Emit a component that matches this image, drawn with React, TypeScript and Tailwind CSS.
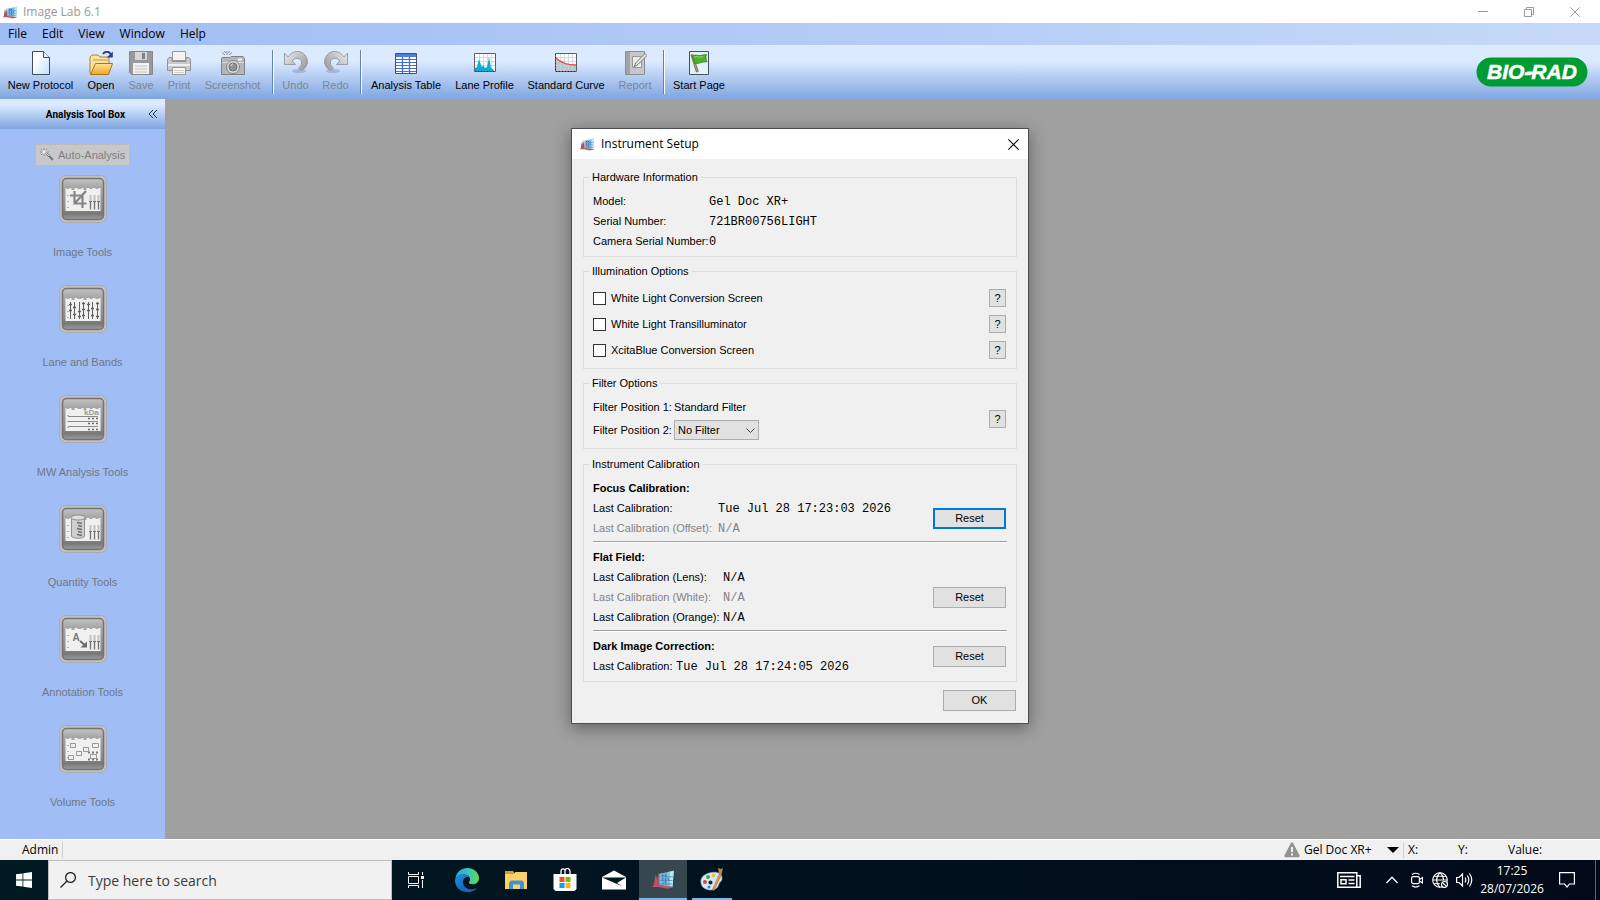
import React from 'react';

interface ToolbarItem {
  label: string;
  width: string;
  icon: React.ReactNode;
  disabled?: boolean;
}

interface CalibrationRow {
  label: string;
  value: string;
  disabled?: boolean;
}

/* ---------- Icons ---------- */

const AppIcon = ({ className = 'w-4 h-4' }: { className?: string }) => (
  <svg viewBox="0 0 16 16" className={className} fill="none">
    <path d="M5.500 4.500L10 3.700 15.200 2.500 14.300 13.200 5.500 12.200z" fill="#7fc4e4" />
    <path d="M11.500 3.400l3.700-.9-.9 10.700-2.800-.4z" fill="#bfe6f3" />
    <path d="M6 6.500h8.500M6 9h8.300M6 11.300h8M8 4.300v8M10 3.900v8.500M12 3.500v9" stroke="#3f83b8" strokeWidth="0.500" />
    <path d="M7 5.500h1M9 5.500h1M7 8h1M9 8h1M11 8h1M9 10h1" stroke="#28578f" strokeWidth="0.800" />
    <path d="M0.500 13.300c1.500-.6 1.600-2.300 1.800-4.800l.9-3.500.8 3.500L5 3.500l.6 8.500 9.900 1.300-4.500 1.200-6-1.200z" fill="#bd5765" />
    <path d="M2.700 8.500v4M4.500 7v5.500" stroke="#8b5575" strokeWidth="0.600" />
  </svg>
);

const NewIcon = () => (
  <svg viewBox="0 0 24 24" className="w-6 h-6">
    <defs>
      <linearGradient id="page" x1="0" y1="0" x2="1" y2="1">
        <stop offset="0.3" stopColor="#fff" />
        <stop offset="1" stopColor="#b9e2fa" />
      </linearGradient>
    </defs>
    <path d="M3.500 0.500h11l6 6v17h-17z" fill="url(#page)" stroke="#3d4f5e" />
    <path d="M14.500 0.500v6h6" fill="#e6f2fa" stroke="#3d4f5e" />
  </svg>
);

const OpenIcon = () => (
  <svg viewBox="0 0 24 24" className="w-6 h-6">
    <defs>
      <linearGradient id="folder" x1="0" y1="0" x2="0" y2="1">
        <stop offset="0" stopColor="#ffe49a" />
        <stop offset="1" stopColor="#eda622" />
      </linearGradient>
    </defs>
    <path d="M1 22V6l2-2h6l2 2h9v16z" fill="#f7e3a0" stroke="#a8822c" />
    <path d="M4 9h15" stroke="#c79b3a" />
    <path d="M1.500 23.500l5-11h17l-4 11z" fill="url(#folder)" stroke="#a8751b" />
    <path d="M14 3c2-3 6-3 7.500 0" fill="none" stroke="#33399a" strokeWidth="2" />
    <path d="M23.800 0.500v6h-6z" fill="#33399a" />
  </svg>
);

const SaveIcon = () => (
  <svg viewBox="0 0 24 24" className="w-6 h-6">
    <path d="M0.500 0.500h23v23h-21l-2-2z" fill="#98999b" stroke="#85868a" />
    <path d="M6 1h12v8H6z" fill="#d6d7d9" />
    <path d="M13 2h3v6h-3z" fill="#808184" />
    <path d="M4 12h16v11H4z" fill="#f1f1f1" />
    <path d="M6 15h12M6 18h12M6 21h12" stroke="#c4c4c4" />
  </svg>
);

const PrintIcon = () => (
  <svg viewBox="0 0 24 24" className="w-6 h-6">
    <path d="M5.500 0.500h13v9h-13z" fill="#f3f3f3" stroke="#98989a" />
    <path d="M2 6.500h3v4h14v-4h3l1.500 2v11h-23v-11z" fill="#c8c9cc" stroke="#909193" />
    <path d="M1 14h22" stroke="#efefef" strokeWidth="2" />
    <path d="M5.500 16.500h13v7h-13z" fill="#f6f6f6" stroke="#98989a" />
    <path d="M7 19.500h10M7 21.500h10" stroke="#cfcfcf" />
  </svg>
);

const ScreenshotIcon = () => (
  <svg viewBox="0 0 24 24" className="w-6 h-6">
    <path d="M6 0v4M1 1.500l3 2.500M11 1.500L8 4M3.500 0l1 2M8.500 0l-1 2" stroke="#8f9093" />
    <path d="M1 6.500h8l1-1h12l1.500 2v16h-23v-16z" fill="#b4b5b8" stroke="#808184" />
    <path d="M1 11.500h22" stroke="#dcdddf" />
    <circle cx="12" cy="16" r="6.500" fill="#d8d8da" stroke="#848587" />
    <circle cx="12" cy="16" r="4" fill="#909194" stroke="#6f7072" />
    <path d="M10 15c0-1.500 1-2 2-2" stroke="#f2f2f2" fill="none" />
    <path d="M17 8.500h4" stroke="#f4f4f4" strokeWidth="2" />
  </svg>
);

const TurnArrow = ({ flip = false }: { flip?: boolean }) => (
  <svg viewBox="0 0 24 24" className={flip ? 'w-6 h-6 -scale-x-100' : 'w-6 h-6'}>
    <defs>
      <linearGradient id="turn" x1="0" y1="0" x2="1" y2="0.600">
        <stop offset="0" stopColor="#eceded" />
        <stop offset="1" stopColor="#a2a4a8" />
      </linearGradient>
    </defs>
    <ellipse cx="15" cy="20" rx="7" ry="2" fill="#8ca3c8" opacity="0.6" />
    <path
      d="M0.500 2l3.500 4C7 1.500 12-.5 16 .8c5 1.700 7.500 6 7.500 10-.3 4.500-3 7.700-6.500 8.400L14.500 17c4-2.500 4-8 .5-9.500-3-1-5 .5-7 2.500l3.500 3.500h-11z"
      fill="url(#turn)"
      stroke="#93959a"
      strokeWidth="0.9"
    />
  </svg>
);

const TableIcon = () => (
  <svg viewBox="0 0 24 24" className="w-6 h-6">
    <path d="M1.500 2.500h21v20h-21z" fill="#fff" stroke="#4a4f5a" />
    <path d="M2 3h20v3H2z" fill="#4f7be8" />
    <path d="M2 8.500h20M2 11.500h20M2 14.500h20M2 17.500h20M2 20.500h20" stroke="#3f6fdc" />
    <path d="M8.500 6v16M15.500 6v16" stroke="#3f6fdc" strokeWidth="1.300" />
  </svg>
);

const ProfileIcon = () => (
  <svg viewBox="0 0 24 24" className="w-6 h-6">
    <path d="M1.500 2.500h21v18h-21z" fill="#fff" stroke="#5c5f66" />
    <path d="M2 6.500h20M2 10.500h20M2 14.500h20M6.500 3v17M10.500 3v17M14.500 3v17M18.500 3v17" stroke="#d4d7dd" />
    <path d="M2 20v-3l2-1 1-4 1-4 2 6 1 2 1-2 2 3 2-1 1-4 1-6 1 5 1 6 2 1 1 2z" fill="#08aed6" />
    <path d="M2 20.500h20" stroke="#333" strokeDasharray="1 2" />
  </svg>
);

const CurveIcon = () => (
  <svg viewBox="0 0 24 24" className="w-6 h-6">
    <path d="M1.500 2.500h21v18h-21z" fill="#fff" stroke="#5c5f66" />
    <path d="M2 7c4 4 9 7 20 7v6H2z" fill="#bcc5cf" />
    <path d="M2 6.500h20M2 10.500h20M2 14.500h20M6.500 3v17M10.500 3v17M14.500 3v17M18.500 3v17" stroke="#cdd1d7" strokeWidth="0.800" />
    <path d="M2 7c4 4 9 7 20 7" fill="none" stroke="#e0525a" strokeWidth="1.300" />
    <path d="M2 20.500h20M1.500 3v17" stroke="#222" strokeDasharray="1 2" />
  </svg>
);

const ReportIcon = () => (
  <svg viewBox="0 0 24 24" className="w-6 h-6">
    <path d="M2.500 0.500h19v23h-19z" fill="#c6c7ca" stroke="#8d8e91" />
    <path d="M3 1h4v22H3z" fill="#a3a4a7" />
    <path d="M9.500 5.500h9v11h-9z" fill="#ececee" stroke="#97989b" />
    <path d="M11 16l2-4.500 9-9 2 2-9 9z" fill="#e4e4e6" stroke="#77787b" />
  </svg>
);

const StartPageIcon = () => (
  <svg viewBox="0 0 24 24" className="w-6 h-6">
    <path d="M2.500 0.500h19v23h-19z" fill="#e2f2fc" stroke="#45525e" />
    <path d="M4 4l1.800-0.500 5.500 17-2 0.500z" fill="#a89a70" stroke="#685f43" strokeWidth="0.700" />
    <path d="M5.500 5c3-2 5 0 8-0.500l6-1c-1 3-0.500 5 0.500 7.500-3-1-6 1.500-12 1.500z" fill="#4fb32a" stroke="#317f1a" strokeWidth="0.800" />
    <path d="M7 6c3-1 5 1 9-0.500" stroke="#92dc65" fill="none" />
  </svg>
);

const WandIcon = () => (
  <svg viewBox="0 0 16 16" className="w-4 h-4">
    <path d="M7 6l7 7" stroke="#77787b" strokeWidth="2.200" />
    <path d="M7 6l3 3" stroke="#e2e2e2" strokeWidth="1" />
    <path d="M5 1v2M5 7v2M1 5h2M8 5h2M2 2l1 1M8 2L7 3M2 8l1-1" stroke="#8c8d90" />
    <circle cx="5" cy="5" r="1.300" fill="#f1f1f1" />
  </svg>
);

const CollapseIcon = () => (
  <svg viewBox="0 0 10 10" className="w-2.5 h-2.5" fill="none" stroke="#1c2f55">
    <path d="M5 1L1 5l4 4M9 1L5 5l4 4" />
  </svg>
);

const CloseIcon = ({ className }: { className: string }) => (
  <svg viewBox="0 0 10 10" className={className} fill="none" stroke="currentColor">
    <path d="M0.300 0.300l9.400 9.400M9.700 0.300L0.300 9.700" />
  </svg>
);

const LaneMarks = () => (
  <g stroke="#747474">
    <path d="M31.500 20v15M35.500 20v15M39.500 20v15" stroke="#c2c2c2" strokeWidth="2" />
    <path d="M30 26.500h3M34 26.500h3M38 26.500h3M31.500 26v8M35.500 26v8M39.500 26v8" />
  </g>
);

// Framed glossy tile shared by every entry of the tool box
const ToolTile = ({ children }: { children: React.ReactNode }) => (
  <svg viewBox="0 0 48 48" className="w-12 h-12">
    <defs>
      <linearGradient id="tile" x1="0" y1="0" x2="0" y2="1">
        <stop offset="0" stopColor="#c4c4c4" />
        <stop offset="0.200" stopColor="#a8a8a8" />
        <stop offset="0.750" stopColor="#8a8a8a" />
        <stop offset="0.850" stopColor="#777" />
        <stop offset="1" stopColor="#9c9c9c" />
      </linearGradient>
    </defs>
    <rect x="0.500" y="0.500" width="47" height="47" rx="6" fill="#c0c0c0" stroke="#a9acb3" />
    <rect x="3.500" y="3.500" width="41" height="41" rx="4" fill="url(#tile)" stroke="#747474" strokeWidth="1.500" />
    <path d="M6.500 13h1v1h3v-1h2v2h3v-2h3v1h4v-1h2v2h3v-2h3v1h3v-1h3v1h3v-1h2v23h-35z" fill="#f0f0f0" />
    <path d="M8 20.500h2M8 26.500h2M8 32.500h2" stroke="#b0b0b0" />
    {children}
  </svg>
);

const BioRadLogo = () => (
  <svg viewBox="0 0 112 30" className="w-28 h-[30px]" role="img" aria-label="BIO-RAD">
    <rect x="0.500" y="0.500" width="111" height="29" rx="14.500" fill="#009b32" />
    <text x="11" y="22" fontFamily="Liberation Sans, sans-serif" fontSize="21" fontWeight="700" fontStyle="italic" fill="#fff" stroke="#fff" strokeWidth="0.500">
      BIO-RAD
    </text>
    <path d="M51 14.500h9v3h-9z" fill="#fff" />
  </svg>
);

/* ---------- Data ---------- */

const MENUS = ['File', 'Edit', 'View', 'Window', 'Help'];

const TOOLBAR: ToolbarItem[][] = [
  [
    { label: 'New Protocol', width: 'w-[65px]', icon: <NewIcon /> },
    { label: 'Open', width: 'w-[26px]', icon: <OpenIcon /> },
    { label: 'Save', width: 'w-[24px]', icon: <SaveIcon />, disabled: true },
    { label: 'Print', width: 'w-[22px]', icon: <PrintIcon />, disabled: true },
    { label: 'Screenshot', width: 'w-[55px]', icon: <ScreenshotIcon />, disabled: true },
  ],
  [
    { label: 'Undo', width: 'w-[25px]', icon: <TurnArrow />, disabled: true },
    { label: 'Redo', width: 'w-[25px]', icon: <TurnArrow flip />, disabled: true },
  ],
  [
    { label: 'Analysis Table', width: 'w-[70px]', icon: <TableIcon /> },
    { label: 'Lane Profile', width: 'w-[57px]', icon: <ProfileIcon /> },
    { label: 'Standard Curve', width: 'w-[76px]', icon: <CurveIcon /> },
    { label: 'Report', width: 'w-[32px]', icon: <ReportIcon />, disabled: true },
  ],
  [{ label: 'Start Page', width: 'w-[50px]', icon: <StartPageIcon /> }],
];

const TOOLS: { label: string; art: React.ReactNode }[] = [
  {
    label: 'Image Tools',
    art: (
      <>
        <LaneMarks />
        <path d="M11 20.500h12.500v12.500M15.500 16v12.500h12M16 28l11-12" fill="none" stroke="#858585" strokeWidth="2.200" />
      </>
    ),
  },
  {
    label: 'Lane and Bands',
    art: (
      <g stroke="#606060">
        <path d="M11.500 17v17M15.500 17v17M20.500 17v17M24.500 17v17M29.500 17v17M33.500 17v17M38.500 17v17" />
        <path d="M10 19.500h3M10 25.500h3M14 22.500h3M14 29.500h3M19 26.500h3M19 31.500h3M23 18.500h3M23 24.500h3M23 30.500h3M28 19.500h3M28 25.500h3M32 23.500h3M32 30.500h3M37 18.500h3M37 24.500h3M37 31.500h3" strokeWidth="1.500" />
      </g>
    ),
  },
  {
    label: 'MW Analysis Tools',
    art: (
      <>
        <path d="M9 21.500h30M9 26.500h30M9 31.500h30" stroke="#8a8a8a" />
        <path d="M29 28.500h10M29 34.500h10M29 23.500h10" stroke="#666" strokeWidth="1.500" strokeDasharray="2 2" />
        <text x="25" y="20" fontFamily="Liberation Sans, sans-serif" fontSize="8" fontWeight="700" fill="#9a9a9a">
          kDa
        </text>
      </>
    ),
  },
  {
    label: 'Quantity Tools',
    art: (
      <>
        <LaneMarks />
        <path d="M12.500 13v18c0 3 13 3 13 0V13" fill="#cfcfcf" stroke="#8e8e8e" />
        <ellipse cx="19" cy="12.500" rx="7" ry="2.500" fill="#dedede" stroke="#8e8e8e" />
        <path d="M18 17.500l5 1M19 20.500l4 1M18 23.500l5 1M19 26.500l4 1M18 29.500l5 1" stroke="#6f6f6f" strokeWidth="1.500" />
      </>
    ),
  },
  {
    label: 'Annotation Tools',
    art: (
      <>
        <LaneMarks />
        <text x="13.500" y="26" fontFamily="Liberation Sans, sans-serif" fontSize="10" fontWeight="700" fill="#7a7a7a">
          A
        </text>
        <path d="M21 26l6 5" stroke="#6b6b6b" strokeWidth="2" />
        <path d="M28 26.500v6h-6.500z" fill="#6b6b6b" />
      </>
    ),
  },
  {
    label: 'Volume Tools',
    art: (
      <>
        <path d="M29 27.500h11M29 34.500h11" stroke="#777" strokeWidth="2" strokeDasharray="2 2" />
        <g fill="#f0f0f0" stroke="#999">
          <path d="M11.500 18.500h5v4h-5zM24.500 22.500h5v4h-5zM33.500 18.500h6v4h-6zM17.500 26.500h5v4h-5zM9.500 30.500h5v4h-5zM31.500 29.500h6v4h-6z" />
        </g>
      </>
    ),
  },
];

const HARDWARE = [
  { label: 'Model:', value: 'Gel Doc XR+' },
  { label: 'Serial Number:', value: '721BR00756LIGHT' },
  { label: 'Camera Serial Number:', value: '0' },
];

const ILLUMINATION = ['White Light Conversion Screen', 'White Light Transilluminator', 'XcitaBlue Conversion Screen'];

const FOCUS_ROWS: CalibrationRow[] = [
  { label: 'Last Calibration:', value: 'Tue Jul 28 17:23:03 2026' },
  { label: 'Last Calibration (Offset):', value: 'N/A', disabled: true },
];

const FLAT_ROWS: CalibrationRow[] = [
  { label: 'Last Calibration (Lens):', value: 'N/A' },
  { label: 'Last Calibration (White):', value: 'N/A', disabled: true },
  { label: 'Last Calibration (Orange):', value: 'N/A' },
];

/* ---------- Dialog parts ---------- */

const Group = ({ title, className, children }: { title: string; className: string; children: React.ReactNode }) => (
  <fieldset className={`border border-[#dcdcdc] pl-[9px] pr-2.5 pt-[7px] ${className}`}>
    <legend className="-ml-1 h-3.5 px-[3px] leading-[14px]">{title}</legend>
    {children}
  </fieldset>
);

const HelpButton = ({ topic }: { topic: string }) => (
  <button title={topic} className="w-[17px] h-[18px] shrink-0 border border-[#adadad] bg-[#e1e1e1] text-center leading-4">
    ?
  </button>
);

const PushButton = ({ children, focused = false }: { children: React.ReactNode; focused?: boolean }) => (
  <button
    className={`w-[73px] h-[21px] shrink-0 bg-[#e1e1e1] text-center leading-[17px] ${
      focused ? 'border-2 border-[#0078d7]' : 'border border-[#adadad]'
    }`}
  >
    {children}
  </button>
);

const Rows = ({ rows, labelWidth }: { rows: CalibrationRow[]; labelWidth: string }) => (
  <dl>
    {rows.map(row => (
      <div key={row.label} className={`flex h-5 items-center ${row.disabled ? 'text-[#838383]' : ''}`}>
        <dt className={`shrink-0 whitespace-nowrap ${labelWidth}`}>{row.label}</dt>
        <dd className="pt-0.5 font-['Liberation_Mono',monospace] text-[12px] leading-[18px]">{row.value}</dd>
      </div>
    ))}
  </dl>
);

const Divider = () => <hr className="-mr-px mt-[3px] mb-1 h-0.5 border-t border-b border-t-[#a0a0a0] border-b-white" />;

const InstrumentSetup = () => (
  <section
    role="dialog"
    aria-labelledby="setup-title"
    className="w-[458px] border border-[#4b4f50] bg-[#f0f0f0] text-[11px] text-black shadow-[0_4px_16px_rgba(0,0,0,0.4)]"
  >
    <header className="flex h-[30px] items-center bg-white pl-[7px] pr-[9px]">
      <AppIcon />
      <h2 id="setup-title" className="ml-1.5 flex-1 font-['Open_Sans',sans-serif] text-[12px]">Instrument Setup</h2>
      <button aria-label="Close">
        <CloseIcon className="w-[11px] h-[11px]" />
      </button>
    </header>

    <div className="px-[11px] pt-[11px] pb-3">
      <div className="flex flex-col gap-[7px]">
        <Group title="Hardware Information" className="pb-[5px]">
          <Rows rows={HARDWARE} labelWidth="w-[116px]" />
        </Group>

        <Group title="Illumination Options" className="pb-[5px]">
          {ILLUMINATION.map(option => (
            <div key={option} className="flex h-[26px] items-center justify-between">
              <label className="flex items-center gap-[5px]">
                <input type="checkbox" className="h-[13px] w-[13px] appearance-none border border-[#333] bg-white" />
                {option}
              </label>
              <HelpButton topic={option} />
            </div>
          ))}
        </Group>

        <Group title="Filter Options" className="pb-2">
          <div className="flex items-center justify-between">
            <div className="flex flex-col gap-[3px]">
              <div className="flex h-5 items-center">
                <span className="w-[81px]">Filter Position 1:</span>
                <span>Standard Filter</span>
              </div>
              <div className="flex h-5 items-center">
                <label htmlFor="filter2" className="w-[81px]">Filter Position 2:</label>
                <div className="relative">
                  <select id="filter2" className="block h-5 w-[85px] appearance-none border border-[#adadad] bg-[#e1e1e1] pl-[3px]">
                    <option>No Filter</option>
                  </select>
                  <svg viewBox="0 0 9 6" className="pointer-events-none absolute right-1 top-2 w-[9px] h-1.5" fill="none" stroke="#444">
                    <path d="M0.500 0.500l4 4 4-4" />
                  </svg>
                </div>
              </div>
            </div>
            <HelpButton topic="Filter Options" />
          </div>
        </Group>
      </div>

      <div className="flex flex-col gap-2 pt-2">
        <Group title="Instrument Calibration" className="pb-[5px]">
          <h3 className="h-5 font-bold leading-5">Focus Calibration:</h3>
          <div className="flex items-center justify-between">
            <Rows rows={FOCUS_ROWS} labelWidth="w-[125px]" />
            <PushButton focused>Reset</PushButton>
          </div>
          <Divider />
          <h3 className="h-5 font-bold leading-5">Flat Field:</h3>
          <div className="flex items-center justify-between">
            <Rows rows={FLAT_ROWS} labelWidth="w-[130px]" />
            <PushButton>Reset</PushButton>
          </div>
          <Divider />
          <div className="flex items-center justify-between">
            <div>
              <h3 className="h-5 font-bold leading-5">Dark Image Correction:</h3>
              <Rows rows={[{ label: 'Last Calibration:', value: 'Tue Jul 28 17:24:05 2026' }]} labelWidth="w-[83px]" />
            </div>
            <PushButton>Reset</PushButton>
          </div>
        </Group>

        <div className="flex justify-end pr-px">
          <PushButton>OK</PushButton>
        </div>
      </div>
    </div>
  </section>
);

/* ---------- Window chrome ---------- */

const TitleBar = () => (
  <header className="flex h-[23px] shrink-0 items-center bg-white pl-0.5 pr-0.5 text-[#999]">
    <AppIcon />
    <h1 className="ml-[5px] flex-1 font-['Open_Sans',sans-serif] text-[12px]">Image Lab 6.1</h1>
    <button aria-label="Minimize" className="flex w-[46px] justify-center">
      <svg viewBox="0 0 10 10" className="w-2.5 h-2.5" stroke="currentColor"><path d="M0 4.500h10" /></svg>
    </button>
    <button aria-label="Restore" className="flex w-[46px] justify-center">
      <svg viewBox="0 0 10 10" className="w-2.5 h-2.5" fill="none" stroke="currentColor">
        <path d="M0.500 2.500h7v7h-7zM2.500 2.500v-2h7v7h-2" />
      </svg>
    </button>
    <button aria-label="Close" className="flex w-[46px] justify-center">
      <CloseIcon className="w-2.5 h-2.5" />
    </button>
  </header>
);

const Toolbar = () => (
  <div className="flex h-[54px] shrink-0 items-start bg-linear-to-b from-[#dceafe] from-30% to-[#7fa5e0] pl-2 text-[11px]">
    {TOOLBAR.map((group, i) => (
      <React.Fragment key={i}>
        {i > 0 && <div className="ml-3 mr-[9px] mt-[5px] h-11 w-0.5 border-l border-r border-l-[#5f7fb5] border-r-white" />}
        <div className="flex gap-[15px] pt-1.5">
          {group.map(item => (
            <button
              key={item.label}
              disabled={item.disabled}
              className={`flex flex-col items-center gap-0.5 whitespace-nowrap ${item.width} ${item.disabled ? 'text-[#7e8793]' : 'text-black'}`}
            >
              <span className="block h-6 w-6">{item.icon}</span>
              <span className="leading-4">{item.label}</span>
            </button>
          ))}
        </div>
      </React.Fragment>
    ))}
    <div className="ml-auto mr-3 mt-3">
      <BioRadLogo />
    </div>
  </div>
);

const ToolBox = () => (
  <aside className="flex w-[165px] shrink-0 flex-col bg-[#a0bdf5] text-[11px]">
    <div className="flex h-[30px] shrink-0 items-center justify-end bg-linear-to-b from-[#dceafe] from-20% to-[#7fa5e0] pr-[7px]">
      <h2 className="mr-[23px] font-['Roboto',sans-serif] text-[10px] font-bold">Analysis Tool Box</h2>
      <button aria-label="Collapse">
        <CollapseIcon />
      </button>
    </div>
    <div className="flex flex-col items-center pt-[15px]">
      <button disabled className="flex h-[22px] w-[95px] items-center gap-[3px] border border-[#bcbcbc] bg-[#c8c8c8] pl-[3px] whitespace-nowrap text-[#808080]">
        <WandIcon />
        Auto-Analysis
      </button>
      <nav className="pt-[9px]">
        {TOOLS.map(tool => (
          <button key={tool.label} disabled className="flex h-[110px] w-full flex-col items-center gap-[21px] text-[#6f7785]">
            <ToolTile>{tool.art}</ToolTile>
            <span className="leading-4">{tool.label}</span>
          </button>
        ))}
      </nav>
    </div>
  </aside>
);

const StatusBar = () => (
  <footer className="flex h-[21px] shrink-0 items-center border-t border-white bg-[#f0f0f0] pl-[22px] font-['Open_Sans',sans-serif] text-[12px] text-black">
    <span className="w-10">Admin</span>
    <span className="h-4 border-l border-[#d0d0d0]" />
    <svg viewBox="0 0 16 16" className="ml-auto w-4 h-4">
      <path d="M8 1.500L14.500 14h-13z" fill="#919191" stroke="#919191" strokeWidth="2.500" strokeLinejoin="round" />
      <path d="M8 5v5M8 11.500v2" stroke="#fff" strokeWidth="1.800" />
    </svg>
    <button className="ml-1 flex w-[99px] items-center justify-between pr-1">
      Gel Doc XR+
      <svg viewBox="0 0 12 6" className="w-3 h-1.5"><path d="M0 0h12L6 6z" /></svg>
    </button>
    <span className="h-4 border-l border-[#d0d0d0]" />
    <span className="ml-1 w-[50px]">X:</span>
    <span className="w-[50px]">Y:</span>
    <span className="w-[92px]">Value:</span>
  </footer>
);

const TaskButton = ({ label, children, className = '' }: { label: string; children: React.ReactNode; className?: string }) => (
  <button aria-label={label} className={`flex h-10 w-12 items-center justify-center ${className}`}>
    {children}
  </button>
);

const Taskbar = () => (
  <div className="flex h-10 shrink-0 items-center bg-linear-to-r from-[#011a22] to-[#020a1a] font-['Open_Sans',sans-serif] text-white">
    <TaskButton label="Start">
      <svg viewBox="0 0 16 16" className="w-4 h-4" fill="#fff">
        <path d="M0 2.300L6.500 1.400v6.200H0zM7.300 1.300L16 0v7.600H7.300zM0 8.400h6.500v6.200L0 13.700zM7.300 8.400H16V16l-8.700-1.300z" />
      </svg>
    </TaskButton>
    <label className="flex h-10 w-[344px] items-center gap-3 border border-[#bdbdbd] bg-[#f1f1f1] pl-[11px]">
      <svg viewBox="0 0 16 16" className="w-4 h-4 shrink-0" fill="none" stroke="#222" strokeWidth="1.300">
        <circle cx="10.500" cy="5.500" r="4.900" />
        <path d="M7 9l-6.500 6.500" />
      </svg>
      <input type="text" placeholder="Type here to search" className="w-full bg-transparent text-[14px] outline-none placeholder:text-[#3c3c3c]" />
    </label>
    <div className="flex gap-px">
      <TaskButton label="Task View">
        <svg viewBox="0 0 16 16" className="w-4 h-4" fill="none" stroke="#fff">
          <path d="M0.500 4.500h10v7h-10zM0.500 0v2.500h10V0M0.500 16v-2.500h10V16M14.500 0v3M14.500 8v8" />
          <path d="M13 4h3v3h-3z" fill="#fff" stroke="none" />
        </svg>
      </TaskButton>
      <TaskButton label="Microsoft Edge" className="ml-0.5">
        <svg viewBox="0 0 24 24" className="w-6 h-6">
          <defs>
            <linearGradient id="edgeTop" x1="0" y1="0.400" x2="1" y2="0.500">
              <stop offset="0" stopColor="#2aa5dc" />
              <stop offset="0.500" stopColor="#35c3c9" />
              <stop offset="1" stopColor="#62d84e" />
            </linearGradient>
            <linearGradient id="edgeLow" x1="0" y1="0" x2="1" y2="1">
              <stop offset="0" stopColor="#1b93dd" />
              <stop offset="1" stopColor="#114a9c" />
            </linearGradient>
          </defs>
          <path d="M0.300 10.500C1.500 4 6.500 0 12.300 0 19 0 24 4.600 24 10c0 4-3 6.300-6.300 6.300-2.700 0-4-1-3.800-2 .1-.6 1.200-1 1.200-3C15 8.500 12 6.500 8.500 6.500 5 6.500 2 8 .3 10.500z" fill="url(#edgeTop)" />
          <path d="M0.100 12C0.500 8.500 4 6.300 8.500 6.500c2.500.1 5 1.300 6 3-3-1.500-6.500.5-6.500 5 0 4 4 7.500 8 7.500 2.700 0 5-1 6-2-2 2.700-5.500 4-10 4C5 24-.3 18.500.1 12z" fill="url(#edgeLow)" />
          <path d="M9.500 10.500c-2 1.500-2.500 6 1 9 3 2.500 8 2.500 11.500 0.500-2 2.700-5.500 4-9.500 4C7 23 5 14 9.500 10.500z" fill="#1568bf" />
        </svg>
      </TaskButton>
      <TaskButton label="File Explorer">
        <svg viewBox="0 0 24 24" className="w-6 h-6">
          <path d="M1 3h8l2 2.500V8H1z" fill="#dc9d24" />
          <path d="M1 6h9l1.500-2H23v17H1z" fill="#fcd268" />
          <path d="M5 21v-6.500l2-2h11l2 2V21h-4v-4.500H9V21z" fill="#4192d0" />
        </svg>
      </TaskButton>
      <TaskButton label="Microsoft Store">
        <svg viewBox="0 0 24 24" className="w-6 h-6">
          <path d="M8 6V3.500C8 0 12 0 12 3v3M12 6V3c0-3.500 5-3.500 5 .5V6" fill="none" stroke="#fff" strokeWidth="1.300" />
          <path d="M0.500 6h23v15l-2 2h-19l-2-2z" fill="#fff" />
          <path d="M6.500 9h5v5h-5z" fill="#f25022" />
          <path d="M12.500 9h5v5h-5z" fill="#7fba00" />
          <path d="M6.500 15h5v5h-5z" fill="#00a4ef" />
          <path d="M12.500 15h5v5h-5z" fill="#ffb900" />
        </svg>
      </TaskButton>
      <TaskButton label="Mail">
        <svg viewBox="0 0 24 24" className="w-6 h-6">
          <path d="M0 9L12 2.500 24 9v12.500H0z" fill="#fff" />
          <path d="M0 9.500h24l-9 5.500 5.500 3.500L10.500 14z" fill="#021820" />
        </svg>
      </TaskButton>
      <TaskButton label="Image Lab" className="border-b-2 border-[#76b9ed] bg-[#36474f]">
        <AppIcon className="w-6 h-6" />
      </TaskButton>
      <TaskButton label="Paint">
        <span className="flex h-10 w-10 items-center justify-center border-b-2 border-[#76b9ed]">
          <svg viewBox="0 0 24 24" className="w-6 h-6">
            <path d="M2 19C-1 13 2 8 9 6c7-2 13 0 13 5 0 4-2 3-3 6s-3 6-8 6c-4 0-8-2-9-4z" fill="#cfe8f6" stroke="#8ab4cc" strokeWidth="0.600" />
            <circle cx="5" cy="15" r="2" fill="#d9483f" />
            <circle cx="8" cy="10" r="2" fill="#3fa64b" />
            <circle cx="13.500" cy="8.500" r="1.800" fill="#f0c036" />
            <circle cx="10.500" cy="15.500" r="2" fill="#0b2a3d" />
            <circle cx="9" cy="20" r="1.500" fill="#3b82d6" />
            <path d="M19.500 6.500l2 1L14 23.500l-1.500-1z" fill="#e8973a" stroke="#a76420" strokeWidth="0.500" />
            <path d="M18 1l3 1 2-1-1.500 6.500-2.500-1z" fill="#b98652" />
          </svg>
        </span>
      </TaskButton>
    </div>

    <div className="ml-auto flex h-10 items-center">
      <svg viewBox="0 0 24 16" className="mr-[25px] w-6 h-4" fill="none" stroke="#fff" strokeWidth="1.500">
        <path d="M0.800 0.800h19v14.400h-19zM19.800 3.800h3.400v11.400h-4M3 4.500h14.500M11.500 8h6M11.500 11.500h6M4 7.800h5v4H4z" />
      </svg>
      <svg viewBox="0 0 12 8" className="mr-[13px] w-3 h-2" fill="none" stroke="#fff" strokeWidth="1.300">
        <path d="M0.500 7L6 1.300 11.500 7" />
      </svg>
      <svg viewBox="0 0 12 16" className="mr-[9px] w-3 h-4" fill="none" stroke="#fff" strokeWidth="1.200">
        <rect x="0.600" y="4.600" width="7.800" height="7" rx="1.500" />
        <path d="M8.500 7.500l3-2v5.500l-3-2M1 2.500Q4.500 0 8.500 2.500M1 13.800Q4.500 16.300 8.500 13.800" />
      </svg>
      <svg viewBox="0 0 16 16" className="mr-2 w-4 h-4" fill="none" stroke="#fff" strokeWidth="1.100">
        <circle cx="8" cy="8" r="7.300" />
        <path d="M8 0.700C3.500 5 3.500 11 8 15.300M8 0.700c2.500 2.300 3.500 4.300 3.500 7M0.700 8h14.600M2 4.300h12M2 11.800h6" />
        <circle cx="12.500" cy="12.500" r="3" fill="#020d1a" />
        <path d="M10.500 10.500l4 4" />
      </svg>
      <svg viewBox="0 0 17 16" className="mr-2 w-[17px] h-4" fill="none" stroke="#fff" strokeWidth="1.200">
        <path d="M0.600 5.500H3l3.500-3.500v12L3 10.500H0.600zM9 5.500q1.500 2.500 0 5M11.300 3.500q3 4.500 0 9M13.500 1.500q4.500 6.500 0 13" />
      </svg>
      <div className="mr-4 flex w-[62px] flex-col items-center text-[12px] leading-[18px]">
        <p>17:25</p>
        <p>28/07/2026</p>
      </div>
      <svg viewBox="0 0 16 16" className="mr-5 w-4 h-4" fill="none" stroke="#fff" strokeWidth="1.200">
        <path d="M0.600 0.600h14.800v11.400h-5L8 15l-2.500-3H0.600z" />
      </svg>
      <span className="mr-1 h-10 border-l border-[#5b6570]" />
    </div>
  </div>
);

export default function App() {
  return (
    <div className="relative flex h-screen flex-col overflow-hidden bg-[#a0a0a0] font-['Liberation_Sans',sans-serif]">
      <TitleBar />
      <nav className="flex h-[22px] shrink-0 items-center gap-[15px] bg-linear-to-r from-[#9fbcf4] to-[#c6d9f8] pl-2 font-['Open_Sans',sans-serif] text-[12px] text-black">
        {MENUS.map(menu => (
          <button key={menu}>{menu}</button>
        ))}
      </nav>
      <Toolbar />
      <main className="flex min-h-0 flex-1">
        <ToolBox />
        <div className="flex-1 bg-[#a0a0a0]" />
      </main>
      <StatusBar />
      <Taskbar />

      <div className="absolute inset-x-0 top-0 bottom-12 flex items-center justify-center">
        <InstrumentSetup />
      </div>
    </div>
  );
}
